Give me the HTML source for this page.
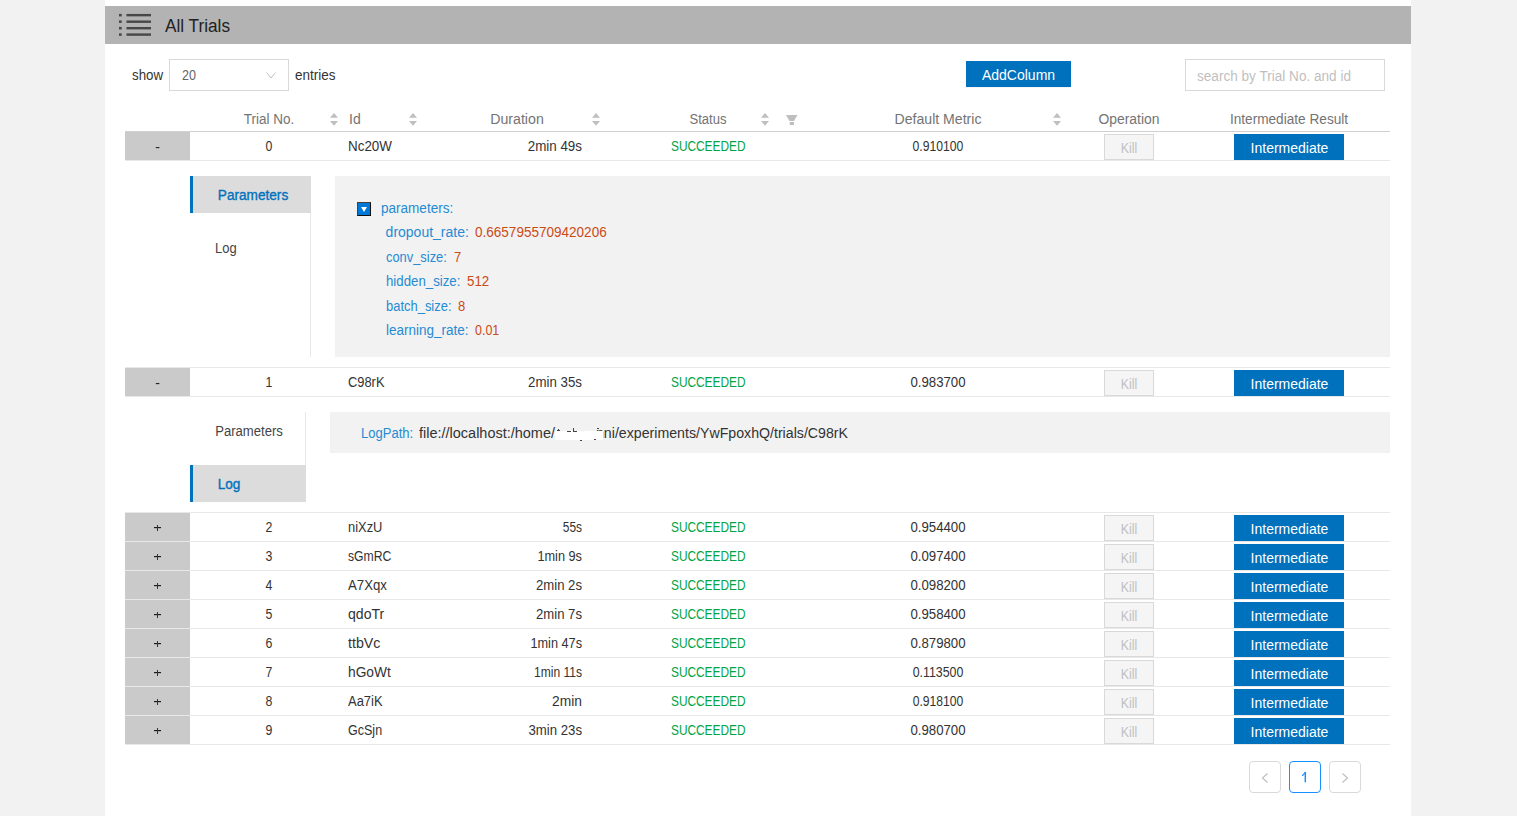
<!DOCTYPE html>
<html><head><meta charset="utf-8"><title>All Trials</title>
<style>
html,body{margin:0;padding:0}
body{width:1517px;height:816px;position:relative;overflow:hidden;background:#f2f2f2;font-family:"Liberation Sans",sans-serif;}
.t{position:absolute;white-space:nowrap;font-family:"Liberation Sans",sans-serif;}
</style></head><body>
<div style="position:absolute;left:105px;top:0px;width:1306px;height:816px;background:#fff"></div>
<div style="position:absolute;left:105px;top:6px;width:1306px;height:38px;background:#b3b3b3"></div>
<svg style="position:absolute;left:119px;top:10px" width="33" height="28" viewBox="0 0 33 28"><g fill="#474747"><rect x="0" y="3.90" width="2.7" height="2.5"/><rect x="7.5" y="3.95" width="24.5" height="2.4"/><rect x="0" y="10.45" width="2.7" height="2.5"/><rect x="7.5" y="10.50" width="24.5" height="2.4"/><rect x="0" y="16.95" width="2.7" height="2.5"/><rect x="7.5" y="17.00" width="24.5" height="2.4"/><rect x="0" y="23.35" width="2.7" height="2.5"/><rect x="7.5" y="23.40" width="24.5" height="2.4"/></g></svg>
<div class="t" style="left:165px;transform-origin:0 50%;top:14px;font-size:18px;line-height:24px;color:#222;transform:scaleX(0.9557);">All Trials</div>
<div class="t" style="left:131.5px;transform-origin:0 50%;top:65px;font-size:14px;line-height:20px;color:#333;transform:scaleX(0.9516);">show</div>
<div style="position:absolute;left:169px;top:59px;width:120px;height:32px;background:#fff;border:1px solid #d9d9d9;box-sizing:border-box"></div>
<div class="t" style="left:181.5px;transform-origin:0 50%;top:65px;font-size:14px;line-height:20px;color:#666;transform:scaleX(0.9000);">20</div>
<svg style="position:absolute;left:266px;top:72px" width="10" height="7" viewBox="0 0 10 7"><path d="M0.5 0.5 L5 6 L9.5 0.5" fill="none" stroke="#bfbfbf" stroke-width="1"/></svg>
<div class="t" style="left:295px;transform-origin:0 50%;top:65px;font-size:14px;line-height:20px;color:#333;transform:scaleX(0.9638);">entries</div>
<div style="position:absolute;left:966px;top:87px;width:105px;height:1px;background:#f4f4f4"></div>
<div style="position:absolute;left:966px;top:61px;width:105px;height:26px;background:#0071bc"></div>
<div class="t" style="left:718.5px;width:600px;text-align:center;transform-origin:50% 50%;top:65px;font-size:14px;line-height:20px;color:#fff;">AddColumn</div>
<div style="position:absolute;left:1185px;top:59px;width:200px;height:32px;background:#fff;border:1px solid #d9d9d9;box-sizing:border-box"></div>
<div class="t" style="left:1197px;transform-origin:0 50%;top:66px;font-size:14px;line-height:20px;color:#bfbfbf;transform:scaleX(0.9701);">search by Trial No. and id</div>
<div class="t" style="left:-31.30000000000001px;width:600px;text-align:center;transform-origin:50% 50%;top:109px;font-size:14px;line-height:20px;color:#747474;transform:scaleX(0.9661);">Trial No.</div>
<div class="t" style="left:349px;transform-origin:0 50%;top:109px;font-size:14px;line-height:20px;color:#747474;">Id</div>
<div class="t" style="left:217.20000000000005px;width:600px;text-align:center;transform-origin:50% 50%;top:109px;font-size:14px;line-height:20px;color:#747474;transform:scaleX(1.0129);">Duration</div>
<div class="t" style="left:407.79999999999995px;width:600px;text-align:center;transform-origin:50% 50%;top:109px;font-size:14px;line-height:20px;color:#747474;transform:scaleX(0.9348);">Status</div>
<div class="t" style="left:638.1px;width:600px;text-align:center;transform-origin:50% 50%;top:109px;font-size:14px;line-height:20px;color:#747474;transform:scaleX(1.0074);">Default Metric</div>
<div class="t" style="left:828.5px;width:600px;text-align:center;transform-origin:50% 50%;top:109px;font-size:14px;line-height:20px;color:#747474;transform:scaleX(0.9922);">Operation</div>
<div class="t" style="left:989.3px;width:600px;text-align:center;transform-origin:50% 50%;top:109px;font-size:14px;line-height:20px;color:#747474;transform:scaleX(0.9737);">Intermediate Result</div>
<svg style="position:absolute;left:330px;top:113px" width="8" height="13" viewBox="0 0 8 13"><path d="M4 0 L8 4.7 L0 4.7 Z M0 8 L8 8 L4 12.7 Z" fill="#bfbfbf"/></svg>
<svg style="position:absolute;left:408.5px;top:113px" width="8" height="13" viewBox="0 0 8 13"><path d="M4 0 L8 4.7 L0 4.7 Z M0 8 L8 8 L4 12.7 Z" fill="#bfbfbf"/></svg>
<svg style="position:absolute;left:592px;top:113px" width="8" height="13" viewBox="0 0 8 13"><path d="M4 0 L8 4.7 L0 4.7 Z M0 8 L8 8 L4 12.7 Z" fill="#bfbfbf"/></svg>
<svg style="position:absolute;left:761px;top:113px" width="8" height="13" viewBox="0 0 8 13"><path d="M4 0 L8 4.7 L0 4.7 Z M0 8 L8 8 L4 12.7 Z" fill="#bfbfbf"/></svg>
<svg style="position:absolute;left:1052.5px;top:113px" width="8" height="13" viewBox="0 0 8 13"><path d="M4 0 L8 4.7 L0 4.7 Z M0 8 L8 8 L4 12.7 Z" fill="#bfbfbf"/></svg>
<svg style="position:absolute;left:786px;top:115px" width="12" height="10" viewBox="0 0 12 10"><path d="M0 0 L11.5 0 L8 6 L3.5 6 Z M3.7 7 L8 7 L8 10 L3.7 10 Z" fill="#bfbfbf"/></svg>
<div style="position:absolute;left:125px;top:131px;width:1265px;height:1px;background:#d0d0d0"></div>
<div style="position:absolute;left:125px;top:132px;width:1265px;height:28px;background:#fff"></div>
<div style="position:absolute;left:125px;top:160px;width:1265px;height:1px;background:#e8e8e8"></div>
<div style="position:absolute;left:125px;top:132px;width:65px;height:28px;background:#cacaca"></div>
<div class="t" style="left:-142.5px;width:600px;text-align:center;transform-origin:50% 50%;top:137px;font-size:14px;line-height:20px;color:#222;">-</div>
<div class="t" style="left:-31.5px;width:600px;text-align:center;transform-origin:50% 50%;top:136px;font-size:14px;line-height:20px;color:#333;transform:scaleX(0.8800);">0</div>
<div class="t" style="left:347.7px;transform-origin:0 50%;top:136px;font-size:14px;line-height:20px;color:#333;transform:scaleX(0.9587);">Nc20W</div>
<div class="t" style="left:-18.200000000000045px;width:600px;text-align:right;transform-origin:100% 50%;top:136px;font-size:14px;line-height:20px;color:#333;transform:scaleX(0.9559);">2min 49s</div>
<div class="t" style="left:670.5px;transform-origin:0 50%;top:136px;font-size:14px;line-height:20px;color:#00a445;transform:scaleX(0.8475);">SUCCEEDED</div>
<div class="t" style="left:638px;width:600px;text-align:center;transform-origin:50% 50%;top:136px;font-size:14px;line-height:20px;color:#333;transform:scaleX(0.8700);">0.910100</div>
<div style="position:absolute;left:1104px;top:134px;width:50px;height:26px;background:#f5f5f5;border:1px solid #d9d9d9;box-sizing:border-box"></div>
<div class="t" style="left:829px;width:600px;text-align:center;transform-origin:50% 50%;top:138px;font-size:14px;line-height:20px;color:#c0c0c0;transform:scaleX(0.8838);">Kill</div>
<div style="position:absolute;left:1234px;top:134px;width:110px;height:26px;background:#0071bc"></div>
<div class="t" style="left:989.5px;width:600px;text-align:center;transform-origin:50% 50%;top:138px;font-size:14px;line-height:20px;color:#fff;">Intermediate</div>
<div style="position:absolute;left:125px;top:368px;width:1265px;height:28px;background:#fff"></div>
<div style="position:absolute;left:125px;top:396px;width:1265px;height:1px;background:#e8e8e8"></div>
<div style="position:absolute;left:125px;top:368px;width:65px;height:28px;background:#cacaca"></div>
<div class="t" style="left:-142.5px;width:600px;text-align:center;transform-origin:50% 50%;top:373px;font-size:14px;line-height:20px;color:#222;">-</div>
<div class="t" style="left:-31.5px;width:600px;text-align:center;transform-origin:50% 50%;top:372px;font-size:14px;line-height:20px;color:#333;transform:scaleX(0.8800);">1</div>
<div class="t" style="left:347.7px;transform-origin:0 50%;top:372px;font-size:14px;line-height:20px;color:#333;transform:scaleX(0.9198);">C98rK</div>
<div class="t" style="left:-18.200000000000045px;width:600px;text-align:right;transform-origin:100% 50%;top:372px;font-size:14px;line-height:20px;color:#333;transform:scaleX(0.9488);">2min 35s</div>
<div class="t" style="left:670.5px;transform-origin:0 50%;top:372px;font-size:14px;line-height:20px;color:#00a445;transform:scaleX(0.8475);">SUCCEEDED</div>
<div class="t" style="left:638px;width:600px;text-align:center;transform-origin:50% 50%;top:372px;font-size:14px;line-height:20px;color:#333;transform:scaleX(0.9454);">0.983700</div>
<div style="position:absolute;left:1104px;top:370px;width:50px;height:26px;background:#f5f5f5;border:1px solid #d9d9d9;box-sizing:border-box"></div>
<div class="t" style="left:829px;width:600px;text-align:center;transform-origin:50% 50%;top:374px;font-size:14px;line-height:20px;color:#c0c0c0;transform:scaleX(0.8838);">Kill</div>
<div style="position:absolute;left:1234px;top:370px;width:110px;height:26px;background:#0071bc"></div>
<div class="t" style="left:989.5px;width:600px;text-align:center;transform-origin:50% 50%;top:374px;font-size:14px;line-height:20px;color:#fff;">Intermediate</div>
<div style="position:absolute;left:125px;top:513px;width:1265px;height:28px;background:#fff"></div>
<div style="position:absolute;left:125px;top:541px;width:1265px;height:1px;background:#e8e8e8"></div>
<div style="position:absolute;left:125px;top:513px;width:65px;height:28px;background:#cacaca"></div>
<div style="position:absolute;left:154px;top:527px;width:7px;height:1px;background:#1a1a1a"></div>
<div style="position:absolute;left:154px;top:528px;width:7px;height:1px;background:#aaaaaa"></div>
<div style="position:absolute;left:157px;top:525px;width:1px;height:6px;background:#333"></div>
<div class="t" style="left:-31.5px;width:600px;text-align:center;transform-origin:50% 50%;top:517px;font-size:14px;line-height:20px;color:#333;transform:scaleX(0.8800);">2</div>
<div class="t" style="left:347.7px;transform-origin:0 50%;top:517px;font-size:14px;line-height:20px;color:#333;transform:scaleX(0.9211);">niXzU</div>
<div class="t" style="left:-18.200000000000045px;width:600px;text-align:right;transform-origin:100% 50%;top:517px;font-size:14px;line-height:20px;color:#333;transform:scaleX(0.8506);">55s</div>
<div class="t" style="left:670.5px;transform-origin:0 50%;top:517px;font-size:14px;line-height:20px;color:#00a445;transform:scaleX(0.8475);">SUCCEEDED</div>
<div class="t" style="left:638px;width:600px;text-align:center;transform-origin:50% 50%;top:517px;font-size:14px;line-height:20px;color:#333;transform:scaleX(0.9454);">0.954400</div>
<div style="position:absolute;left:1104px;top:515px;width:50px;height:26px;background:#f5f5f5;border:1px solid #d9d9d9;box-sizing:border-box"></div>
<div class="t" style="left:829px;width:600px;text-align:center;transform-origin:50% 50%;top:519px;font-size:14px;line-height:20px;color:#c0c0c0;transform:scaleX(0.8838);">Kill</div>
<div style="position:absolute;left:1234px;top:515px;width:110px;height:26px;background:#0071bc"></div>
<div class="t" style="left:989.5px;width:600px;text-align:center;transform-origin:50% 50%;top:519px;font-size:14px;line-height:20px;color:#fff;">Intermediate</div>
<div style="position:absolute;left:125px;top:542px;width:1265px;height:28px;background:#fff"></div>
<div style="position:absolute;left:125px;top:570px;width:1265px;height:1px;background:#e8e8e8"></div>
<div style="position:absolute;left:125px;top:542px;width:65px;height:28px;background:#cacaca"></div>
<div style="position:absolute;left:154px;top:556px;width:7px;height:1px;background:#1a1a1a"></div>
<div style="position:absolute;left:154px;top:557px;width:7px;height:1px;background:#aaaaaa"></div>
<div style="position:absolute;left:157px;top:554px;width:1px;height:6px;background:#333"></div>
<div class="t" style="left:-31.5px;width:600px;text-align:center;transform-origin:50% 50%;top:546px;font-size:14px;line-height:20px;color:#333;transform:scaleX(0.8800);">3</div>
<div class="t" style="left:347.7px;transform-origin:0 50%;top:546px;font-size:14px;line-height:20px;color:#333;transform:scaleX(0.8720);">sGmRC</div>
<div class="t" style="left:-18.200000000000045px;width:600px;text-align:right;transform-origin:100% 50%;top:546px;font-size:14px;line-height:20px;color:#333;transform:scaleX(0.9098);">1min 9s</div>
<div class="t" style="left:670.5px;transform-origin:0 50%;top:546px;font-size:14px;line-height:20px;color:#00a445;transform:scaleX(0.8475);">SUCCEEDED</div>
<div class="t" style="left:638px;width:600px;text-align:center;transform-origin:50% 50%;top:546px;font-size:14px;line-height:20px;color:#333;transform:scaleX(0.9454);">0.097400</div>
<div style="position:absolute;left:1104px;top:544px;width:50px;height:26px;background:#f5f5f5;border:1px solid #d9d9d9;box-sizing:border-box"></div>
<div class="t" style="left:829px;width:600px;text-align:center;transform-origin:50% 50%;top:548px;font-size:14px;line-height:20px;color:#c0c0c0;transform:scaleX(0.8838);">Kill</div>
<div style="position:absolute;left:1234px;top:544px;width:110px;height:26px;background:#0071bc"></div>
<div class="t" style="left:989.5px;width:600px;text-align:center;transform-origin:50% 50%;top:548px;font-size:14px;line-height:20px;color:#fff;">Intermediate</div>
<div style="position:absolute;left:125px;top:571px;width:1265px;height:28px;background:#fff"></div>
<div style="position:absolute;left:125px;top:599px;width:1265px;height:1px;background:#e8e8e8"></div>
<div style="position:absolute;left:125px;top:571px;width:65px;height:28px;background:#cacaca"></div>
<div style="position:absolute;left:154px;top:585px;width:7px;height:1px;background:#1a1a1a"></div>
<div style="position:absolute;left:154px;top:586px;width:7px;height:1px;background:#aaaaaa"></div>
<div style="position:absolute;left:157px;top:583px;width:1px;height:6px;background:#333"></div>
<div class="t" style="left:-31.5px;width:600px;text-align:center;transform-origin:50% 50%;top:575px;font-size:14px;line-height:20px;color:#333;transform:scaleX(0.8800);">4</div>
<div class="t" style="left:347.7px;transform-origin:0 50%;top:575px;font-size:14px;line-height:20px;color:#333;transform:scaleX(0.9431);">A7Xqx</div>
<div class="t" style="left:-18.200000000000045px;width:600px;text-align:right;transform-origin:100% 50%;top:575px;font-size:14px;line-height:20px;color:#333;transform:scaleX(0.9384);">2min 2s</div>
<div class="t" style="left:670.5px;transform-origin:0 50%;top:575px;font-size:14px;line-height:20px;color:#00a445;transform:scaleX(0.8475);">SUCCEEDED</div>
<div class="t" style="left:638px;width:600px;text-align:center;transform-origin:50% 50%;top:575px;font-size:14px;line-height:20px;color:#333;transform:scaleX(0.9454);">0.098200</div>
<div style="position:absolute;left:1104px;top:573px;width:50px;height:26px;background:#f5f5f5;border:1px solid #d9d9d9;box-sizing:border-box"></div>
<div class="t" style="left:829px;width:600px;text-align:center;transform-origin:50% 50%;top:577px;font-size:14px;line-height:20px;color:#c0c0c0;transform:scaleX(0.8838);">Kill</div>
<div style="position:absolute;left:1234px;top:573px;width:110px;height:26px;background:#0071bc"></div>
<div class="t" style="left:989.5px;width:600px;text-align:center;transform-origin:50% 50%;top:577px;font-size:14px;line-height:20px;color:#fff;">Intermediate</div>
<div style="position:absolute;left:125px;top:600px;width:1265px;height:28px;background:#fff"></div>
<div style="position:absolute;left:125px;top:628px;width:1265px;height:1px;background:#e8e8e8"></div>
<div style="position:absolute;left:125px;top:600px;width:65px;height:28px;background:#cacaca"></div>
<div style="position:absolute;left:154px;top:614px;width:7px;height:1px;background:#1a1a1a"></div>
<div style="position:absolute;left:154px;top:615px;width:7px;height:1px;background:#aaaaaa"></div>
<div style="position:absolute;left:157px;top:612px;width:1px;height:6px;background:#333"></div>
<div class="t" style="left:-31.5px;width:600px;text-align:center;transform-origin:50% 50%;top:604px;font-size:14px;line-height:20px;color:#333;transform:scaleX(0.8800);">5</div>
<div class="t" style="left:347.7px;transform-origin:0 50%;top:604px;font-size:14px;line-height:20px;color:#333;transform:scaleX(1.0068);">qdoTr</div>
<div class="t" style="left:-18.200000000000045px;width:600px;text-align:right;transform-origin:100% 50%;top:604px;font-size:14px;line-height:20px;color:#333;transform:scaleX(0.9384);">2min 7s</div>
<div class="t" style="left:670.5px;transform-origin:0 50%;top:604px;font-size:14px;line-height:20px;color:#00a445;transform:scaleX(0.8475);">SUCCEEDED</div>
<div class="t" style="left:638px;width:600px;text-align:center;transform-origin:50% 50%;top:604px;font-size:14px;line-height:20px;color:#333;transform:scaleX(0.9454);">0.958400</div>
<div style="position:absolute;left:1104px;top:602px;width:50px;height:26px;background:#f5f5f5;border:1px solid #d9d9d9;box-sizing:border-box"></div>
<div class="t" style="left:829px;width:600px;text-align:center;transform-origin:50% 50%;top:606px;font-size:14px;line-height:20px;color:#c0c0c0;transform:scaleX(0.8838);">Kill</div>
<div style="position:absolute;left:1234px;top:602px;width:110px;height:26px;background:#0071bc"></div>
<div class="t" style="left:989.5px;width:600px;text-align:center;transform-origin:50% 50%;top:606px;font-size:14px;line-height:20px;color:#fff;">Intermediate</div>
<div style="position:absolute;left:125px;top:629px;width:1265px;height:28px;background:#fff"></div>
<div style="position:absolute;left:125px;top:657px;width:1265px;height:1px;background:#e8e8e8"></div>
<div style="position:absolute;left:125px;top:629px;width:65px;height:28px;background:#cacaca"></div>
<div style="position:absolute;left:154px;top:643px;width:7px;height:1px;background:#1a1a1a"></div>
<div style="position:absolute;left:154px;top:644px;width:7px;height:1px;background:#aaaaaa"></div>
<div style="position:absolute;left:157px;top:641px;width:1px;height:6px;background:#333"></div>
<div class="t" style="left:-31.5px;width:600px;text-align:center;transform-origin:50% 50%;top:633px;font-size:14px;line-height:20px;color:#333;transform:scaleX(0.8800);">6</div>
<div class="t" style="left:347.7px;transform-origin:0 50%;top:633px;font-size:14px;line-height:20px;color:#333;transform:scaleX(1.0156);">ttbVc</div>
<div class="t" style="left:-18.200000000000045px;width:600px;text-align:right;transform-origin:100% 50%;top:633px;font-size:14px;line-height:20px;color:#333;transform:scaleX(0.9084);">1min 47s</div>
<div class="t" style="left:670.5px;transform-origin:0 50%;top:633px;font-size:14px;line-height:20px;color:#00a445;transform:scaleX(0.8475);">SUCCEEDED</div>
<div class="t" style="left:638px;width:600px;text-align:center;transform-origin:50% 50%;top:633px;font-size:14px;line-height:20px;color:#333;transform:scaleX(0.9454);">0.879800</div>
<div style="position:absolute;left:1104px;top:631px;width:50px;height:26px;background:#f5f5f5;border:1px solid #d9d9d9;box-sizing:border-box"></div>
<div class="t" style="left:829px;width:600px;text-align:center;transform-origin:50% 50%;top:635px;font-size:14px;line-height:20px;color:#c0c0c0;transform:scaleX(0.8838);">Kill</div>
<div style="position:absolute;left:1234px;top:631px;width:110px;height:26px;background:#0071bc"></div>
<div class="t" style="left:989.5px;width:600px;text-align:center;transform-origin:50% 50%;top:635px;font-size:14px;line-height:20px;color:#fff;">Intermediate</div>
<div style="position:absolute;left:125px;top:658px;width:1265px;height:28px;background:#fff"></div>
<div style="position:absolute;left:125px;top:686px;width:1265px;height:1px;background:#e8e8e8"></div>
<div style="position:absolute;left:125px;top:658px;width:65px;height:28px;background:#cacaca"></div>
<div style="position:absolute;left:154px;top:672px;width:7px;height:1px;background:#1a1a1a"></div>
<div style="position:absolute;left:154px;top:673px;width:7px;height:1px;background:#aaaaaa"></div>
<div style="position:absolute;left:157px;top:670px;width:1px;height:6px;background:#333"></div>
<div class="t" style="left:-31.5px;width:600px;text-align:center;transform-origin:50% 50%;top:662px;font-size:14px;line-height:20px;color:#333;transform:scaleX(0.8800);">7</div>
<div class="t" style="left:347.7px;transform-origin:0 50%;top:662px;font-size:14px;line-height:20px;color:#333;transform:scaleX(0.9825);">hGoWt</div>
<div class="t" style="left:-18.200000000000045px;width:600px;text-align:right;transform-origin:100% 50%;top:662px;font-size:14px;line-height:20px;color:#333;transform:scaleX(0.8607);">1min 11s</div>
<div class="t" style="left:670.5px;transform-origin:0 50%;top:662px;font-size:14px;line-height:20px;color:#00a445;transform:scaleX(0.8475);">SUCCEEDED</div>
<div class="t" style="left:638px;width:600px;text-align:center;transform-origin:50% 50%;top:662px;font-size:14px;line-height:20px;color:#333;transform:scaleX(0.8840);">0.113500</div>
<div style="position:absolute;left:1104px;top:660px;width:50px;height:26px;background:#f5f5f5;border:1px solid #d9d9d9;box-sizing:border-box"></div>
<div class="t" style="left:829px;width:600px;text-align:center;transform-origin:50% 50%;top:664px;font-size:14px;line-height:20px;color:#c0c0c0;transform:scaleX(0.8838);">Kill</div>
<div style="position:absolute;left:1234px;top:660px;width:110px;height:26px;background:#0071bc"></div>
<div class="t" style="left:989.5px;width:600px;text-align:center;transform-origin:50% 50%;top:664px;font-size:14px;line-height:20px;color:#fff;">Intermediate</div>
<div style="position:absolute;left:125px;top:687px;width:1265px;height:28px;background:#fff"></div>
<div style="position:absolute;left:125px;top:715px;width:1265px;height:1px;background:#e8e8e8"></div>
<div style="position:absolute;left:125px;top:687px;width:65px;height:28px;background:#cacaca"></div>
<div style="position:absolute;left:154px;top:701px;width:7px;height:1px;background:#1a1a1a"></div>
<div style="position:absolute;left:154px;top:702px;width:7px;height:1px;background:#aaaaaa"></div>
<div style="position:absolute;left:157px;top:699px;width:1px;height:6px;background:#333"></div>
<div class="t" style="left:-31.5px;width:600px;text-align:center;transform-origin:50% 50%;top:691px;font-size:14px;line-height:20px;color:#333;transform:scaleX(0.8800);">8</div>
<div class="t" style="left:347.7px;transform-origin:0 50%;top:691px;font-size:14px;line-height:20px;color:#333;transform:scaleX(0.9262);">Aa7iK</div>
<div class="t" style="left:-18.200000000000045px;width:600px;text-align:right;transform-origin:100% 50%;top:691px;font-size:14px;line-height:20px;color:#333;transform:scaleX(0.9853);">2min</div>
<div class="t" style="left:670.5px;transform-origin:0 50%;top:691px;font-size:14px;line-height:20px;color:#00a445;transform:scaleX(0.8475);">SUCCEEDED</div>
<div class="t" style="left:638px;width:600px;text-align:center;transform-origin:50% 50%;top:691px;font-size:14px;line-height:20px;color:#333;transform:scaleX(0.8683);">0.918100</div>
<div style="position:absolute;left:1104px;top:689px;width:50px;height:26px;background:#f5f5f5;border:1px solid #d9d9d9;box-sizing:border-box"></div>
<div class="t" style="left:829px;width:600px;text-align:center;transform-origin:50% 50%;top:693px;font-size:14px;line-height:20px;color:#c0c0c0;transform:scaleX(0.8838);">Kill</div>
<div style="position:absolute;left:1234px;top:689px;width:110px;height:26px;background:#0071bc"></div>
<div class="t" style="left:989.5px;width:600px;text-align:center;transform-origin:50% 50%;top:693px;font-size:14px;line-height:20px;color:#fff;">Intermediate</div>
<div style="position:absolute;left:125px;top:716px;width:1265px;height:28px;background:#fff"></div>
<div style="position:absolute;left:125px;top:744px;width:1265px;height:1px;background:#e8e8e8"></div>
<div style="position:absolute;left:125px;top:716px;width:65px;height:28px;background:#cacaca"></div>
<div style="position:absolute;left:154px;top:730px;width:7px;height:1px;background:#1a1a1a"></div>
<div style="position:absolute;left:154px;top:731px;width:7px;height:1px;background:#aaaaaa"></div>
<div style="position:absolute;left:157px;top:728px;width:1px;height:6px;background:#333"></div>
<div class="t" style="left:-31.5px;width:600px;text-align:center;transform-origin:50% 50%;top:720px;font-size:14px;line-height:20px;color:#333;transform:scaleX(0.8800);">9</div>
<div class="t" style="left:347.7px;transform-origin:0 50%;top:720px;font-size:14px;line-height:20px;color:#333;transform:scaleX(0.8945);">GcSjn</div>
<div class="t" style="left:-18.200000000000045px;width:600px;text-align:right;transform-origin:100% 50%;top:720px;font-size:14px;line-height:20px;color:#333;transform:scaleX(0.9436);">3min 23s</div>
<div class="t" style="left:670.5px;transform-origin:0 50%;top:720px;font-size:14px;line-height:20px;color:#00a445;transform:scaleX(0.8475);">SUCCEEDED</div>
<div class="t" style="left:638px;width:600px;text-align:center;transform-origin:50% 50%;top:720px;font-size:14px;line-height:20px;color:#333;transform:scaleX(0.9454);">0.980700</div>
<div style="position:absolute;left:1104px;top:718px;width:50px;height:26px;background:#f5f5f5;border:1px solid #d9d9d9;box-sizing:border-box"></div>
<div class="t" style="left:829px;width:600px;text-align:center;transform-origin:50% 50%;top:722px;font-size:14px;line-height:20px;color:#c0c0c0;transform:scaleX(0.8838);">Kill</div>
<div style="position:absolute;left:1234px;top:718px;width:110px;height:26px;background:#0071bc"></div>
<div class="t" style="left:989.5px;width:600px;text-align:center;transform-origin:50% 50%;top:722px;font-size:14px;line-height:20px;color:#fff;">Intermediate</div>
<div style="position:absolute;left:125px;top:161px;width:1265px;height:206px;background:#fff"></div>
<div style="position:absolute;left:125px;top:367px;width:1265px;height:1px;background:#e8e8e8"></div>
<div style="position:absolute;left:310px;top:176px;width:1px;height:181px;background:#e8e8e8"></div>
<div style="position:absolute;left:190px;top:176px;width:121px;height:37px;background:#dcdcdc"></div>
<div style="position:absolute;left:190px;top:176px;width:3px;height:37px;background:#0071bc"></div>
<div class="t" style="left:-47px;width:600px;text-align:center;transform-origin:50% 50%;top:185px;font-size:14px;line-height:20px;color:#0071bc;transform:scaleX(0.9729);-webkit-text-stroke:0.35px #0071bc;">Parameters</div>
<div class="t" style="left:215px;transform-origin:0 50%;top:238px;font-size:14px;line-height:20px;color:#444;transform:scaleX(0.9247);">Log</div>
<div style="position:absolute;left:335px;top:176px;width:1055px;height:181px;background:#f2f2f2"></div>
<div style="position:absolute;left:357px;top:202px;width:14px;height:14px;box-sizing:border-box;border:1px solid #111;border-top-color:#4a4038;border-left-color:#4a4038;background:#0078d7"></div>
<svg style="position:absolute;left:361px;top:207px" width="6" height="5" viewBox="0 0 6 5"><path d="M0 0 L6 0 L3 5 Z" fill="#fff"/></svg>
<div class="t" style="left:381.4px;transform-origin:0 50%;top:198px;font-size:14px;line-height:20px;color:#268bd2;transform:scaleX(0.9666);">parameters:</div>
<div class="t" style="left:385.6px;transform-origin:0 50%;top:222px;font-size:14px;line-height:20px;color:#268bd2;">dropout_rate:</div>
<div class="t" style="left:475.3px;transform-origin:0 50%;top:222px;font-size:14px;line-height:20px;color:#cb4b16;transform:scaleX(0.9666);">0.6657955709420206</div>
<div class="t" style="left:385.6px;transform-origin:0 50%;top:247px;font-size:14px;line-height:20px;color:#268bd2;transform:scaleX(0.9192);">conv_size:</div>
<div class="t" style="left:453.6px;transform-origin:0 50%;top:247px;font-size:14px;line-height:20px;color:#cb4b16;transform:scaleX(0.9300);">7</div>
<div class="t" style="left:385.6px;transform-origin:0 50%;top:271px;font-size:14px;line-height:20px;color:#268bd2;transform:scaleX(0.9464);">hidden_size:</div>
<div class="t" style="left:466.9px;transform-origin:0 50%;top:271px;font-size:14px;line-height:20px;color:#cb4b16;transform:scaleX(0.9504);">512</div>
<div class="t" style="left:385.6px;transform-origin:0 50%;top:296px;font-size:14px;line-height:20px;color:#268bd2;transform:scaleX(0.9249);">batch_size:</div>
<div class="t" style="left:458.2px;transform-origin:0 50%;top:296px;font-size:14px;line-height:20px;color:#cb4b16;transform:scaleX(0.9300);">8</div>
<div class="t" style="left:385.6px;transform-origin:0 50%;top:320px;font-size:14px;line-height:20px;color:#268bd2;transform:scaleX(0.9648);">learning_rate:</div>
<div class="t" style="left:475.3px;transform-origin:0 50%;top:320px;font-size:14px;line-height:20px;color:#cb4b16;transform:scaleX(0.8918);">0.01</div>
<div style="position:absolute;left:125px;top:397px;width:1265px;height:115px;background:#fff"></div>
<div style="position:absolute;left:125px;top:512px;width:1265px;height:1px;background:#e8e8e8"></div>
<div style="position:absolute;left:305px;top:412px;width:1px;height:53px;background:#e8e8e8"></div>
<div class="t" style="left:-51.5px;width:600px;text-align:center;transform-origin:50% 50%;top:421px;font-size:14px;line-height:20px;color:#444;transform:scaleX(0.9356);">Parameters</div>
<div style="position:absolute;left:190px;top:465px;width:116px;height:37px;background:#dcdcdc"></div>
<div style="position:absolute;left:190px;top:465px;width:3px;height:37px;background:#0071bc"></div>
<div class="t" style="left:-71px;width:600px;text-align:center;transform-origin:50% 50%;top:474px;font-size:14px;line-height:20px;color:#0071bc;transform:scaleX(0.9718);-webkit-text-stroke:0.35px #0071bc;">Log</div>
<div style="position:absolute;left:330px;top:412px;width:1060px;height:41px;background:#f2f2f2"></div>
<div class="t" style="left:361px;transform-origin:0 50%;top:423px;font-size:14px;line-height:20px;color:#268bd2;transform:scaleX(0.9296);">LogPath:</div>
<div class="t" style="left:419px;transform-origin:0 50%;top:423px;font-size:14px;line-height:20px;color:#333;transform:scaleX(1.0342);">file://localhost:/home/</div>
<div class="t" style="left:248px;width:600px;text-align:right;transform-origin:100% 50%;top:423px;font-size:14px;line-height:20px;color:#333;transform:scaleX(1.0121);">nni/experiments/YwFpoxhQ/trials/C98rK</div>
<div style="position:absolute;left:555px;top:431px;width:48px;height:9px;background:#fff"></div>
<div style="position:absolute;left:557px;top:430px;width:3px;height:1px;background:#444"></div>
<div style="position:absolute;left:558px;top:429px;width:1px;height:2px;background:#444"></div>
<div style="position:absolute;left:567px;top:431px;width:4px;height:1px;background:#444"></div>
<div style="position:absolute;left:573px;top:428px;width:1px;height:4px;background:#444"></div>
<div style="position:absolute;left:574px;top:431px;width:3px;height:1px;background:#444"></div>
<div style="position:absolute;left:580px;top:440px;width:2px;height:1px;background:#444"></div>
<div style="position:absolute;left:597px;top:428px;width:2px;height:1px;background:#444"></div>
<div style="position:absolute;left:594px;top:439px;width:2px;height:1px;background:#444"></div>
<div style="position:absolute;left:1249px;top:761px;width:32px;height:32px;box-sizing:border-box;border-radius:4px;border:1px solid #d9d9d9"><svg style="position:absolute;left:11px;top:11px" width="8" height="10" viewBox="0 0 8 10"><path d="M6.5 0.5 L1.5 5 L6.5 9.5" fill="none" stroke="#bfbfbf" stroke-width="1.2"/></svg></div>
<div style="position:absolute;left:1289px;top:761px;width:32px;height:32px;box-sizing:border-box;border-radius:4px;border:1px solid #1890ff"></div>
<svg style="position:absolute;left:1300px;top:770px" width="10" height="14" viewBox="0 0 10 14"><path d="M5.3 2 L5.3 12.3" stroke="#1890ff" stroke-width="1.5" fill="none"/><path d="M5.6 2.2 L2.2 5.8" stroke="#1890ff" stroke-width="1.2" fill="none"/></svg>
<div style="position:absolute;left:1329px;top:761px;width:32px;height:32px;box-sizing:border-box;border-radius:4px;border:1px solid #d9d9d9"><svg style="position:absolute;left:11px;top:11px" width="8" height="10" viewBox="0 0 8 10"><path d="M1.5 0.5 L6.5 5 L1.5 9.5" fill="none" stroke="#bfbfbf" stroke-width="1.2"/></svg></div>
</body></html>
